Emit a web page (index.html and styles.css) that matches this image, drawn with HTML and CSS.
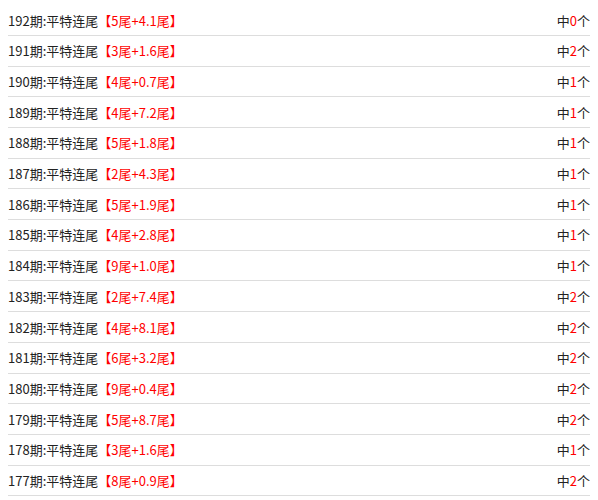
FILE: index.html
```html
<!DOCTYPE html>
<html lang="zh">
<head>
<meta charset="utf-8">
<title>平特连尾</title>
<link rel="stylesheet" href="styles.css">
</head>
<body>
<ul class="list">
  <li class="row"><span class="title">192期:平特连尾<em class="red">【5尾+4.1尾】</em></span><span class="res">中<em class="red">0</em>个</span></li>
  <li class="row"><span class="title">191期:平特连尾<em class="red">【3尾+1.6尾】</em></span><span class="res">中<em class="red">2</em>个</span></li>
  <li class="row"><span class="title">190期:平特连尾<em class="red">【4尾+0.7尾】</em></span><span class="res">中<em class="red">1</em>个</span></li>
  <li class="row"><span class="title">189期:平特连尾<em class="red">【4尾+7.2尾】</em></span><span class="res">中<em class="red">1</em>个</span></li>
  <li class="row"><span class="title">188期:平特连尾<em class="red">【5尾+1.8尾】</em></span><span class="res">中<em class="red">1</em>个</span></li>
  <li class="row"><span class="title">187期:平特连尾<em class="red">【2尾+4.3尾】</em></span><span class="res">中<em class="red">1</em>个</span></li>
  <li class="row"><span class="title">186期:平特连尾<em class="red">【5尾+1.9尾】</em></span><span class="res">中<em class="red">1</em>个</span></li>
  <li class="row"><span class="title">185期:平特连尾<em class="red">【4尾+2.8尾】</em></span><span class="res">中<em class="red">1</em>个</span></li>
  <li class="row"><span class="title">184期:平特连尾<em class="red">【9尾+1.0尾】</em></span><span class="res">中<em class="red">1</em>个</span></li>
  <li class="row"><span class="title">183期:平特连尾<em class="red">【2尾+7.4尾】</em></span><span class="res">中<em class="red">2</em>个</span></li>
  <li class="row"><span class="title">182期:平特连尾<em class="red">【4尾+8.1尾】</em></span><span class="res">中<em class="red">2</em>个</span></li>
  <li class="row"><span class="title">181期:平特连尾<em class="red">【6尾+3.2尾】</em></span><span class="res">中<em class="red">2</em>个</span></li>
  <li class="row"><span class="title">180期:平特连尾<em class="red">【9尾+0.4尾】</em></span><span class="res">中<em class="red">2</em>个</span></li>
  <li class="row"><span class="title">179期:平特连尾<em class="red">【5尾+8.7尾】</em></span><span class="res">中<em class="red">2</em>个</span></li>
  <li class="row"><span class="title">178期:平特连尾<em class="red">【3尾+1.6尾】</em></span><span class="res">中<em class="red">1</em>个</span></li>
  <li class="row"><span class="title">177期:平特连尾<em class="red">【8尾+0.9尾】</em></span><span class="res">中<em class="red">2</em>个</span></li>
</ul>
</body>
</html>
```

FILE: styles.css
```css
html, body {
  margin: 0;
  padding: 0;
  background: #fff;
}
body {
  padding: 5.3px 8px 0;
  font-family: "Noto Sans CJK SC", "Noto Sans", sans-serif;
  font-size: 13px;
  color: #222;
}
.list {
  list-style: none;
  margin: 0;
  padding: 0;
}
.row {
  display: flex;
  justify-content: space-between;
  align-items: center;
  height: 29.7px;
  border-bottom: 1px solid #ddd;
}
.red {
  font-style: normal;
  color: #f00;
}
```
